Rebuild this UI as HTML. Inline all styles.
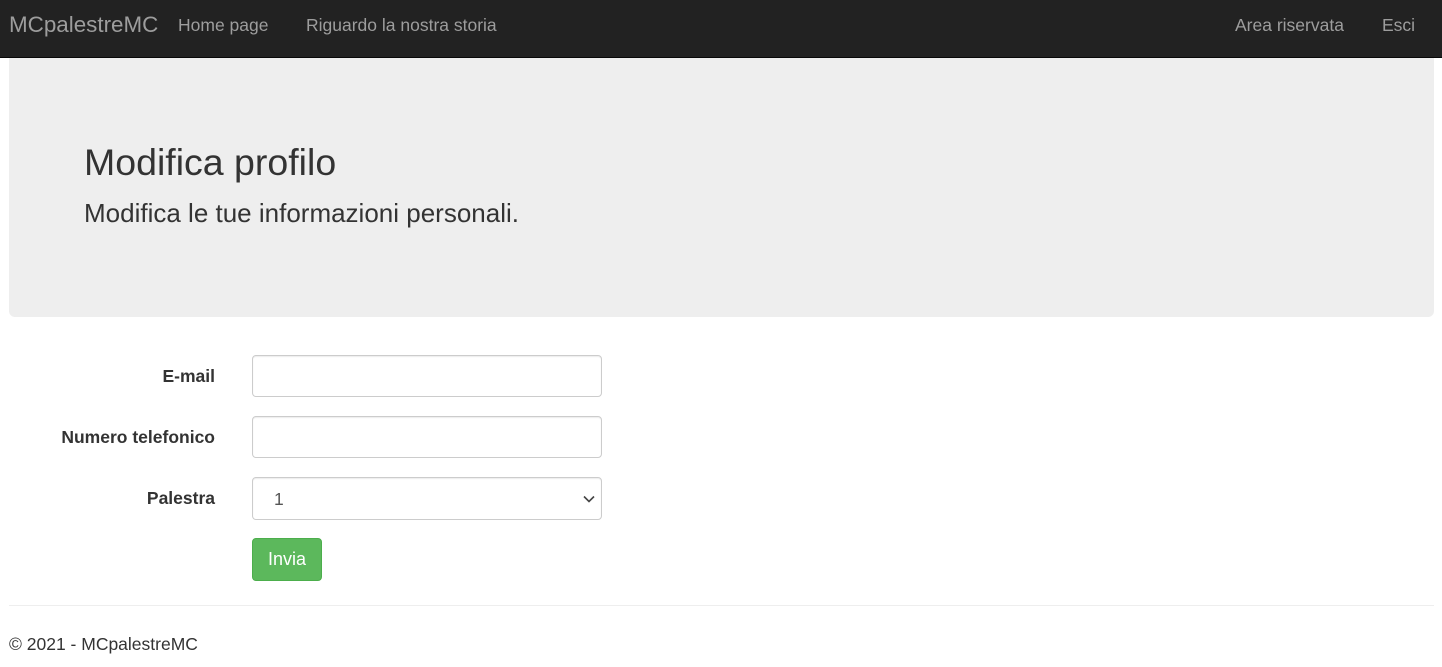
<!DOCTYPE html>
<html><head><meta charset="utf-8"><style>
*{box-sizing:border-box;margin:0;padding:0}
body{width:1442px;height:667px;background:#fff;font-family:"Liberation Sans",Arial,sans-serif;color:#333;position:relative;overflow:hidden}
.nav{position:absolute;left:0;top:0;width:1442px;height:58px;background:#222;border-bottom:1px solid #080808}
.nav span{position:absolute;top:0;line-height:50px;color:#9d9d9d;font-size:17.5px}
.nav .brand{font-size:22.4px;left:9px}
.jumbo{position:absolute;left:9px;top:58px;width:1425px;height:259px;background:#eee;border-radius:0 0 6px 6px}
h1{position:absolute;left:84px;top:139px;font-size:37.5px;font-weight:400;line-height:46px;white-space:nowrap}
.sub{position:absolute;left:84px;top:198px;font-size:26px;line-height:30px;white-space:nowrap}
.lbl{position:absolute;right:1227px;font-size:17.5px;font-weight:bold;line-height:20px;white-space:nowrap}
.inp{position:absolute;left:252px;width:350px;height:42px;border:1px solid #ccc;border-radius:4px;background:#fff;box-shadow:inset 0 1px 1px rgba(0,0,0,.075)}
.btn{position:absolute;left:252px;top:538px;width:70px;height:43px;background:#5cb85c;border:1px solid #4cae4c;border-radius:4px;color:#fff;font-size:18px;line-height:41px;text-align:center}
hr{position:absolute;left:9px;top:605px;width:1425px;border:0;border-top:1px solid #eee}
.foot{position:absolute;left:9px;top:634px;font-size:17.5px;line-height:20px}
</style></head><body>
<div class="nav">
<span class="brand" style="top:0">MCpalestreMC</span>
<span style="left:178px">Home page</span>
<span style="left:306px">Riguardo la nostra storia</span>
<span style="left:1235px">Area riservata</span>
<span style="left:1382px">Esci</span>
</div>
<div class="jumbo"></div>
<h1>Modifica profilo</h1>
<div class="sub">Modifica le tue informazioni personali.</div>
<div class="lbl" style="top:366px">E-mail</div>
<div class="inp" style="top:355px"></div>
<div class="lbl" style="top:427px">Numero telefonico</div>
<div class="inp" style="top:416px"></div>
<div class="lbl" style="top:488px">Palestra</div>
<div class="inp" style="top:477px;height:43px"><span style="position:absolute;left:21px;top:11px;font-size:17.5px;color:#555">1</span>
<svg style="position:absolute;right:6px;top:17px" width="12" height="8" viewBox="0 0 12 8"><path d="M1 1.5L6 6.5L11 1.5" fill="none" stroke="#444" stroke-width="1.6"/></svg></div>
<div class="btn">Invia</div>
<hr>
<div class="foot">© 2021 - MCpalestreMC</div>
</body></html>
